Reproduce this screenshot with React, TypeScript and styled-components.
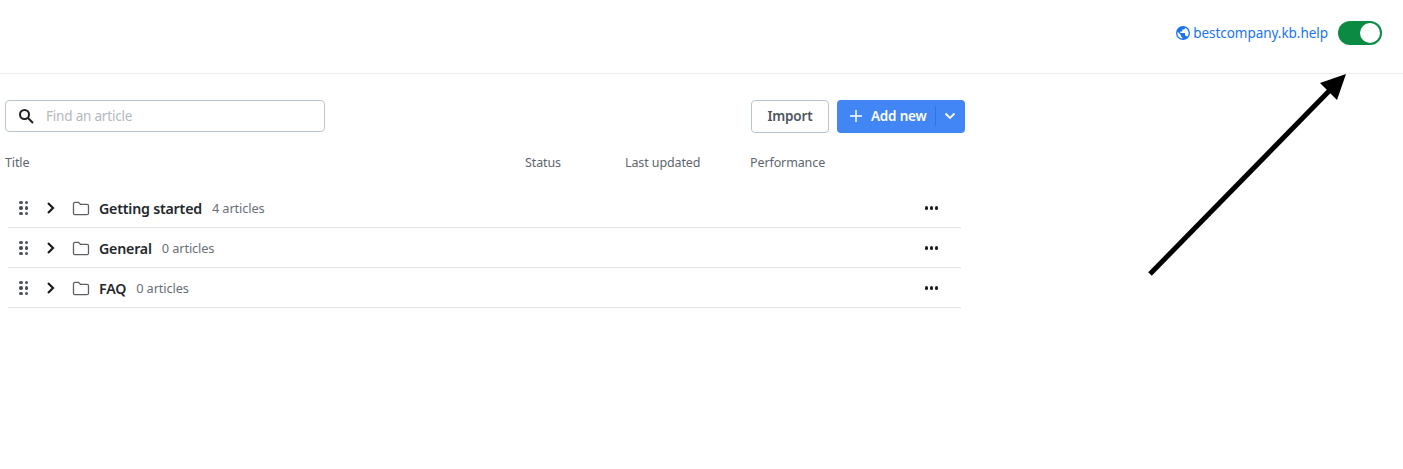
import React from "react";
import styled, { createGlobalStyle } from "styled-components";

const GlobalStyle = createGlobalStyle`
  html, body {
    margin: 0;
    padding: 0;
    background: #fff;
    font-family: "Noto Sans", "Open Sans", sans-serif;
  }
`;

const Page = styled.div`
  position: relative;
  width: 1403px;
  height: 469px;
  overflow: hidden;
`;

const TopBar = styled.header`
  display: flex;
  align-items: center;
  justify-content: flex-end;
  gap: 10px;
  height: 74px;
  padding: 0 21px 7px 0;
  box-sizing: border-box;
  border-bottom: 1px solid #ececec;
`;

const DomainLink = styled.a`
  display: flex;
  align-items: center;
  gap: 3px;
  font-size: 13.5px;
  letter-spacing: -0.04px;
  color: #1a73f0;
  text-decoration: none;
`;

const Toggle = styled.div`
  display: flex;
  align-items: center;
  justify-content: flex-end;
  width: 44px;
  height: 24px;
  padding: 2px;
  box-sizing: border-box;
  border-radius: 12px;
  background: #0b8a43;
`;

const Knob = styled.span`
  width: 20px;
  height: 20px;
  border-radius: 50%;
  background: #fff;
`;

const Content = styled.main`
  width: 965px;
  padding: 26px 0 0 5px;
  box-sizing: border-box;
`;

const Toolbar = styled.div`
  display: flex;
  align-items: flex-start;
  justify-content: space-between;
`;

const SearchBox = styled.div`
  display: flex;
  align-items: center;
  gap: 11px;
  width: 320px;
  height: 32px;
  padding-left: 11px;
  box-sizing: border-box;
  border: 1px solid #b9c4d0;
  border-radius: 4px;
  font-size: 13.5px;
  letter-spacing: -0.2px;
  color: #b4b8bd;
`;

const Actions = styled.div`
  display: flex;
  gap: 8px;
`;

const ImportButton = styled.button`
  width: 78px;
  height: 33px;
  padding: 0 0 2px;
  border: 1px solid #b9c4d0;
  border-radius: 4px;
  background: #fff;
  font: 600 13.5px "Noto Sans", sans-serif;
  letter-spacing: -0.2px;
  color: #4e5661;
`;

const AddButton = styled.div`
  display: flex;
  align-items: center;
  width: 128px;
  height: 33px;
  box-sizing: border-box;
  padding: 0 0 1px 12px;
  border-radius: 4px;
  background: #4285f4;
  font-weight: 600;
  font-size: 13.5px;
  letter-spacing: -0.2px;
  color: #fff;
`;

const AddLabel = styled.span`
  margin-left: 8px;
  width: 57px;
`;

const AddDivider = styled.span`
  width: 1px;
  height: 20px;
  margin-left: 7px;
  background: #2f72e0;
`;

const AddCaret = styled.span`
  display: flex;
  flex: 1;
  justify-content: center;
  padding-right: 2px;
`;

const ColumnHeader = styled.div`
  display: grid;
  grid-template-columns: 520px 100px 125px 1fr;
  height: 20px;
  margin-top: 19px;
  align-items: center;
  font-size: 12.5px;
  letter-spacing: -0.11px;
  color: #60666e;
`;

const Rows = styled.div`
  width: 953px;
  margin: 16px 0 0 3px;
`;

const Row = styled.div`
  display: flex;
  align-items: center;
  height: 40px;
  box-sizing: border-box;
  padding: 1px 23px 0 11px;
  border-bottom: 1px solid #e2e2e2;
`;

const Handle = styled.span`
  display: grid;
  grid-template-columns: repeat(2, 3.5px);
  gap: 2px 2px;
  width: 9px;
`;

const Dot = styled.span`
  width: 3.5px;
  height: 3.5px;
  border-radius: 50%;
  background: #4d5259;
`;

const Expand = styled.span`
  display: flex;
  margin-left: 17px;
`;

const Folder = styled.span`
  display: flex;
  margin-left: 15px;
`;

const RowTitle = styled.span`
  margin-left: 9px;
  font-size: 14.2px;
  font-weight: 600;
  letter-spacing: -0.2px;
  color: #24272b;
`;

const RowCount = styled.span`
  margin-left: 10px;
  font-size: 12.8px;
  letter-spacing: -0.12px;
  color: #6a7078;
`;

const More = styled.span`
  display: flex;
  gap: 1.5px;
  margin-left: auto;
`;

const MoreDot = styled.span`
  width: 3.5px;
  height: 3.5px;
  border-radius: 50%;
  background: #1b1b1b;
`;

const ArrowOverlay = styled.svg`
  position: absolute;
  left: 0;
  top: 0;
  pointer-events: none;
`;

const folders = [
  { title: "Getting started", count: 4 },
  { title: "General", count: 0 },
  { title: "FAQ", count: 0 },
];

const App = () => {
  return (
    <Page>
      <GlobalStyle />
      <TopBar>
        <DomainLink href="#">
          <svg width="14" height="14" viewBox="2 2 20 20" fill="#1a73f0">
            <path d="M12 2a10 10 0 1 0 0 20 10 10 0 0 0 0-20zM4 12c0-.6.1-1.200.2-1.800L9 15v1c0 1.100.9 2 2 2v1.900A8 8 0 0 1 4 12zm13.900 5.400c-.3-.8-1-1.400-1.900-1.400h-1v-3c0-.6-.4-1-1-1H8v-2h2c.6 0 1-.4 1-1V7h2c1.100 0 2-.9 2-2v-.4a8 8 0 0 1 2.900 12.800z" />
          </svg>
          bestcompany.kb.help
        </DomainLink>
        <Toggle>
          <Knob />
        </Toggle>
      </TopBar>

      <Content>
        <Toolbar>
          <SearchBox>
            <svg width="18" height="18" viewBox="0 0 18 18" fill="none" stroke="#1f1f1f" strokeWidth="2">
              <circle cx="7.500" cy="7.500" r="4.500" />
              <path d="M11 11l5 5" />
            </svg>
            Find an article
          </SearchBox>
          <Actions>
            <ImportButton>Import</ImportButton>
            <AddButton>
              <svg width="14" height="14" viewBox="0 0 14 14" stroke="#fff" strokeWidth="1.500">
                <path d="M7 1v12M1 7h12" />
              </svg>
              <AddLabel>Add new</AddLabel>
              <AddDivider />
              <AddCaret>
                <svg width="12" height="8" viewBox="0 0 12 8" fill="none" stroke="#fff" strokeWidth="1.800">
                  <path d="M1.500 1.500L6 6l4.500-4.500" />
                </svg>
              </AddCaret>
            </AddButton>
          </Actions>
        </Toolbar>

        <ColumnHeader>
          <span>Title</span>
          <span>Status</span>
          <span>Last updated</span>
          <span>Performance</span>
        </ColumnHeader>

        <Rows>
          {folders.map((folder) => (
            <Row key={folder.title}>
              <Handle>
                {[0, 1, 2, 3, 4, 5].map((i) => (
                  <Dot key={i} />
                ))}
              </Handle>
              <Expand>
                <svg width="12" height="14" viewBox="0 0 12 14" fill="none" stroke="#1b1b1b" strokeWidth="2.200">
                  <path d="M3 2l5 5-5 5" />
                </svg>
              </Expand>
              <Folder>
                <svg width="18" height="15" viewBox="0 0 18 15" fill="none" stroke="#5b5f66" strokeWidth="1.300">
                  <path d="M1.500 3c0-1 .6-1.600 1.500-1.600h3.600l1.800 1.900h6.600c.9 0 1.500.6 1.500 1.500v7.400c0 .9-.6 1.500-1.500 1.500H3c-.9 0-1.500-.6-1.500-1.500z" />
                </svg>
              </Folder>
              <RowTitle>{folder.title}</RowTitle>
              <RowCount>{folder.count} articles</RowCount>
              <More>
                <MoreDot />
                <MoreDot />
                <MoreDot />
              </More>
            </Row>
          ))}
        </Rows>
      </Content>

      <ArrowOverlay width="1403" height="469" viewBox="0 0 1403 469">
        <path d="M1150 274L1332 88" stroke="#000" strokeWidth="5" fill="none" />
        <path d="M1346 74L1320 83L1337 100z" fill="#000" />
      </ArrowOverlay>
    </Page>
  );
};

export default App;
